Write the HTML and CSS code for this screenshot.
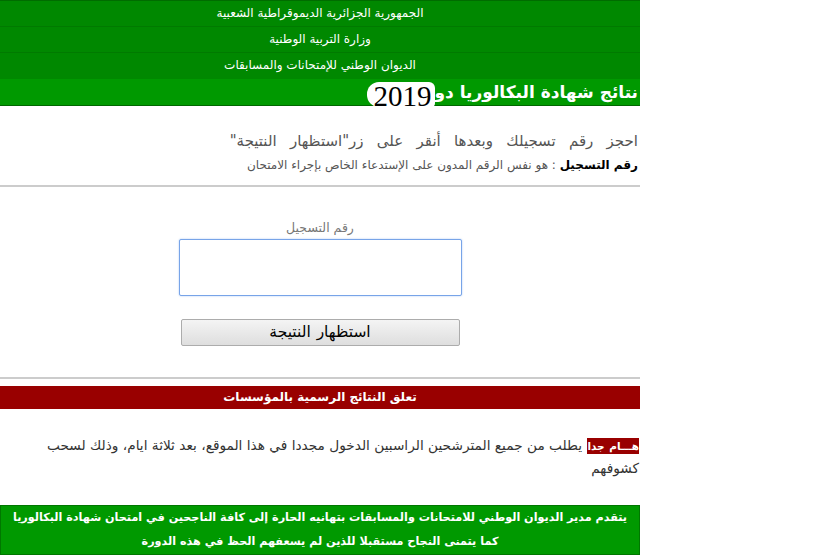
FILE: index.html
```html
<!DOCTYPE html>
<html lang="ar">
<head>
<meta charset="utf-8">
<title>نتائج شهادة البكالوريا</title>
<link rel="stylesheet" href="styles.css">
</head>
<body>
<div class="page">
  <div class="head">
    <div class="head-row">الجمهورية الجزائرية الديموقراطية الشعبية</div>
    <div class="head-row">وزارة التربية الوطنية</div>
    <div class="head-row">الديوان الوطني للإمتحانات والمسابقات</div>
  </div>
  <div class="title">نتائج شهادة البكالوريا دو<span class="year">2019</span></div>

  <div class="intro">
    <p class="line line-1">احجز رقم تسجيلك وبعدها أنقر على زر"استظهار النتيجة"</p>
    <p class="line"><span class="strong">رقم التسجيل</span> : هو نفس الرقم المدون على الإستدعاء الخاص بإجراء الامتحان</p>
  </div>
  <div class="rule"></div>

  <form class="form">
    <label class="label" for="reg">رقم التسجيل</label>
    <textarea class="input" id="reg"></textarea>
    <button class="btn" type="button">استظهار النتيجة</button>
  </form>
  <div class="rule rule-2"></div>

  <div class="red-band">تعلق النتائج الرسمية بالمؤسسات</div>

  <p class="notice"><span class="hot">هـــام جدا</span> يطلب من جميع المترشحين الراسبين الدخول مجددا في هذا الموقع، بعد ثلاثة ايام، وذلك لسحب كشوفهم</p>

  <div class="green-band">
    <div>يتقدم مدير الديوان الوطني للامتحانات والمسابقات بتهانيه الحارة إلى كافة الناجحين في امتحان شهادة البكالوريا</div>
    <div>كما يتمنى النجاح مستقبلا للذين لم يسعفهم الحظ في هذه الدورة</div>
  </div>
</div>
</body>
</html>
```

FILE: styles.css
```css
html, body {
  margin: 0;
  padding: 0;
  background: #ffffff;
}
.page {
  width: 640px;
  direction: rtl;
  font-family: "DejaVu Sans", sans-serif;
}
.head {
  background: #008800;
  border-top: 1px solid #006c00;
}
.head-row {
  height: 25px;
  line-height: 25px;
  border-bottom: 1px solid #007a00;
  color: #ffffff;
  font-size: 12px;
  text-align: center;
}
.head-row:last-child {
  height: 26px;
  border-bottom: 0;
}
.title {
  height: 26px;
  line-height: 26px;
  background: #009900;
  border-bottom: 1px solid #006600;
  color: #ffffff;
  font-size: 17px;
  font-weight: bold;
  text-align: right;
  padding-right: 2px;
  white-space: nowrap;
}
.year {
  display: inline-block;
  vertical-align: top;
  height: 25px;
  line-height: 28px;
  margin-top: 3px;
  padding: 0 3px 0 7px;
  background: #ffffff;
  border-radius: 12px 6px 4px 12px;
  color: #000000;
  font-family: "Liberation Serif", serif;
  font-size: 29px;
  font-weight: normal;
  direction: ltr;
}
.intro {
  margin-top: 24px;
  padding-right: 2px;
}
.line {
  margin: 0;
  font-size: 12px;
  line-height: 24px;
  color: #555555;
}
.line-1 {
  font-size: 15px;
  word-spacing: 8.5px;
  line-height: 23px;
}
.strong {
  color: #000000;
  font-weight: bold;
}
.rule {
  margin-top: 8px;
  height: 0;
  border-top: 2px solid #cccccc;
}
.form {
  margin: 32px 0 0;
  display: flex;
  flex-direction: column;
  align-items: center;
}
.label {
  height: 18px;
  line-height: 18px;
  font-size: 12.5px;
  color: #777777;
}
.input {
  margin-top: 2px;
  width: 283px;
  height: 57px;
  box-sizing: border-box;
  border: 1px solid #78a4e8;
  border-radius: 2px;
  box-shadow: 0 0 2px #a9c7f2;
  resize: none;
  padding: 0;
  background: #ffffff;
}
.btn {
  margin-top: 23px;
  width: 279px;
  height: 27px;
  box-sizing: border-box;
  border: 1px solid #acacac;
  border-radius: 2px;
  background: linear-gradient(#f4f4f4, #dedede);
  font-family: "DejaVu Sans", sans-serif;
  font-size: 15.5px;
  word-spacing: 1px;
  line-height: 25px;
  color: #000000;
  padding: 0;
}
.rule-2 {
  margin-top: 31px;
}
.red-band {
  margin-top: 7px;
  height: 23px;
  line-height: 23px;
  background: #990000;
  color: #ffffff;
  font-size: 12px;
  font-weight: bold;
  text-align: center;
}
.notice {
  margin: 25px 0 0;
  font-size: 13.7px;
  line-height: 23px;
  color: #333333;
  padding-right: 1px;
  padding-left: 34px;
}
.hot {
  display: inline-block;
  line-height: 16px;
  margin-left: 1px;
  background: #990000;
  color: #ffffff;
  font-weight: bold;
  font-size: 10.5px;
  word-spacing: 1px;
}
.green-band {
  margin-top: 25px;
  background: #009900;
  border: 1px solid #007700;
  color: #ffffff;
  font-size: 11.2px;
  font-weight: bold;
  line-height: 24px;
  text-align: center;
}
```
